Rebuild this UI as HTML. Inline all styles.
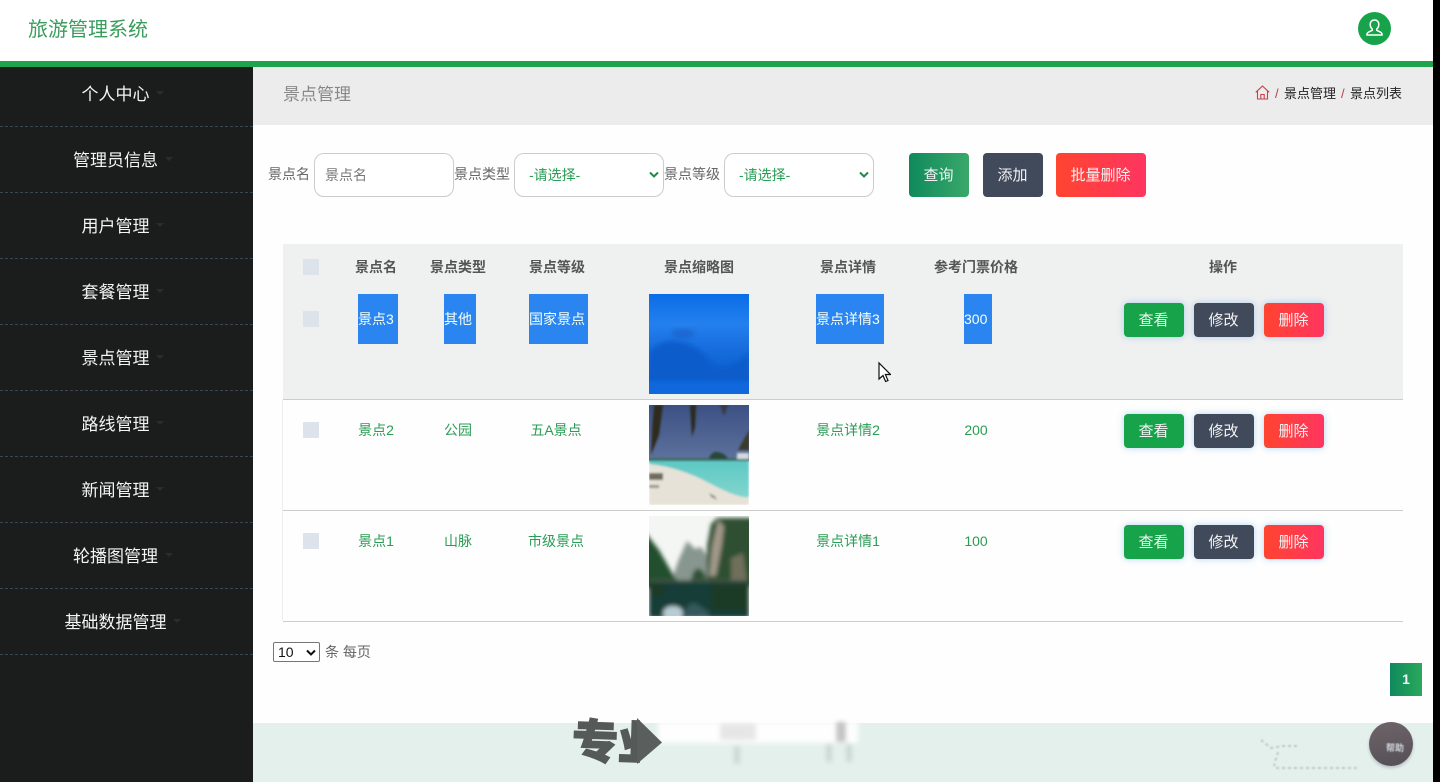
<!DOCTYPE html>
<html lang="zh-CN">
<head>
<meta charset="utf-8">
<title>旅游管理系统</title>
<style>
*{box-sizing:border-box;margin:0;padding:0}
html,body{width:1440px;height:782px;overflow:hidden;background:#fdfefd;font-family:"Liberation Sans","Noto Sans CJK SC",sans-serif}
.a{position:absolute}
.t{position:absolute;white-space:nowrap;line-height:20px}
.menu{position:absolute;left:0;width:253px;height:66px;border-bottom:1px dashed #3a4652;color:#f4f4f4;font-size:17px;text-align:center;line-height:68px;padding-right:22px}
.menu i{position:absolute;top:30px;width:0;height:0;border:4px solid transparent;border-top-color:#2c2c2c}
.th{position:absolute;top:257px;font-size:14px;font-weight:700;color:#555;line-height:20px;white-space:nowrap;transform:translateX(-50%)}
.td{position:absolute;font-size:14px;color:#2a9c55;line-height:20px;white-space:nowrap;transform:translateX(-50%)}
.hl{position:absolute;top:294px;height:50px;background:#2b85f0;color:#f4fff8;font-size:14px;line-height:50px;white-space:nowrap}
.cb{position:absolute;left:303px;width:16px;height:16px;background:#dde3ea}
.btn{position:absolute;width:60px;height:34px;border-radius:4px;color:#f4f4f4;font-size:15px;line-height:36px;text-align:center;padding-right:1px;box-shadow:0 0 7px rgba(90,160,230,.45)}
.g{background:#17a34a}.d{background:#414a5a}.r{background:linear-gradient(90deg,#ff4430,#ff3560)}
.inp{position:absolute;top:153px;height:44px;border:1px solid #ccc;border-radius:10px;background:#fff;font-size:14px;line-height:42px;padding-left:10px;color:#777}
.lab{position:absolute;top:164px;font-size:14px;color:#666;line-height:20px;white-space:nowrap}
.top{position:absolute;top:153px;height:44px;border-radius:4px;color:#f4f4f4;font-size:15px;line-height:46px;text-align:center;padding-right:1px}
.line{position:absolute;left:283px;width:1120px;height:1px;background:#ccc}
</style>
</head>
<body>
<!-- header -->
<div class="a" style="left:0;top:0;width:1440px;height:61px;background:#fff"></div>
<div class="t" style="left:28px;top:17px;font-size:20px;line-height:26px;color:#3a9d5d">旅游管理系统</div>
<div class="a" style="left:1358px;top:12px;width:33px;height:33px;border-radius:50%;background:#17a34a"></div>
<svg class="a" style="left:1358px;top:12px" width="33" height="33" viewBox="0 0 33 33" fill="none" stroke="#fff" stroke-width="1.5"><path d="M16.500 8c-2.700 0-4.300 2-4.300 4.400 0 2 .8 3.600 2 4.600v1.400c-1.600 1-5 1.600-5.200 3.600v1h15v-1c-.2-2-3.600-2.600-5.200-3.600V17c1.200-1 2-2.600 2-4.600C20.800 10 19.200 8 16.500 8z"/></svg>
<div class="a" style="left:0;top:61px;width:1440px;height:6px;background:#1fa34c"></div>

<!-- sidebar -->
<div class="a" style="left:0;top:67px;width:253px;height:715px;background:#1b1c1c"></div>
<div class="menu" style="top:67px;height:60px;line-height:56px">个人中心<i style="left:156px;top:24px"></i></div>
<div class="menu" style="top:127px">管理员信息<i style="left:165px"></i></div>
<div class="menu" style="top:193px">用户管理<i style="left:156px"></i></div>
<div class="menu" style="top:259px">套餐管理<i style="left:156px"></i></div>
<div class="menu" style="top:325px">景点管理<i style="left:156px"></i></div>
<div class="menu" style="top:391px">路线管理<i style="left:156px"></i></div>
<div class="menu" style="top:457px">新闻管理<i style="left:156px"></i></div>
<div class="menu" style="top:523px">轮播图管理<i style="left:165px"></i></div>
<div class="menu" style="top:589px">基础数据管理<i style="left:173px"></i></div>

<!-- breadcrumb bar -->
<div class="a" style="left:253px;top:67px;width:1180px;height:58px;background:#ebeceb"></div>
<div class="t" style="left:283px;top:85px;font-size:17px;color:#888">景点管理</div>
<svg class="a" style="left:1255px;top:85px" width="15" height="15" viewBox="0 0 15 15" fill="none" stroke="#c8404e" stroke-width="1.1"><path d="M.8 7.300L7.500 1l6.700 6.300M2.500 6.300V14h10V6.300M5.800 14V9.500h3.400V14"/></svg>
<div class="t" style="left:1275px;top:84px;font-size:13px;color:#b5404e">/</div>
<div class="t" style="left:1284px;top:84px;font-size:13px;color:#222">景点管理</div>
<div class="t" style="left:1341px;top:84px;font-size:13px;color:#b5404e">/</div>
<div class="t" style="left:1350px;top:84px;font-size:13px;color:#222">景点列表</div>

<!-- search -->
<div class="lab" style="left:268px">景点名</div>
<div class="inp" style="left:314px;width:140px">景点名</div>
<div class="lab" style="left:454px">景点类型</div>
<div class="inp" style="left:514px;width:150px;color:#2a9c55;padding-left:14px">-请选择-</div>
<svg class="a" style="left:649px;top:171px" width="10" height="8" viewBox="0 0 10 8" fill="none" stroke="#1f8a4c" stroke-width="2"><path d="M1 1.500l4 4 4-4"/></svg>
<div class="lab" style="left:664px">景点等级</div>
<div class="inp" style="left:724px;width:150px;color:#2a9c55;padding-left:14px">-请选择-</div>
<svg class="a" style="left:859px;top:171px" width="10" height="8" viewBox="0 0 10 8" fill="none" stroke="#1f8a4c" stroke-width="2"><path d="M1 1.500l4 4 4-4"/></svg>
<div class="top" style="left:909px;width:60px;background:linear-gradient(90deg,#0f8a5c,#3aa86a)">查询</div>
<div class="top" style="left:983px;width:60px;background:#414a5a">添加</div>
<div class="top" style="left:1056px;width:90px;background:linear-gradient(90deg,#ff4430,#ff3560)">批量删除</div>

<!-- table -->
<div class="a" style="left:283px;top:244px;width:1120px;height:155px;background:#eff0f0"></div>
<div class="line" style="top:399px"></div>
<div class="line" style="top:510px"></div>
<div class="line" style="top:621px"></div>
<div class="a" style="left:282px;top:400px;width:1px;height:221px;background:#eeeeee"></div>

<div class="cb" style="top:259px"></div>
<div class="th" style="left:376px">景点名</div>
<div class="th" style="left:458px">景点类型</div>
<div class="th" style="left:557px">景点等级</div>
<div class="th" style="left:699px">景点缩略图</div>
<div class="th" style="left:848px">景点详情</div>
<div class="th" style="left:976px">参考门票价格</div>
<div class="th" style="left:1223px">操作</div>

<!-- row 1 -->
<div class="cb" style="top:311px"></div>
<div class="hl" style="left:358px;width:40px">景点3</div>
<div class="hl" style="left:444px;width:32px">其他</div>
<div class="hl" style="left:529px;width:59px">国家景点</div>
<div class="hl" style="left:816px;width:68px">景点详情3</div>
<div class="hl" style="left:964px;width:28px">300</div>
<svg class="a" style="left:649px;top:294px" width="100" height="100" viewBox="0 0 100 100">
<defs><linearGradient id="s1" x1="0" y1="0" x2="0" y2="1"><stop offset="0" stop-color="#0a6de6"/><stop offset=".3" stop-color="#2480ee"/><stop offset=".5" stop-color="#1a70e0"/><stop offset=".85" stop-color="#0a5cca"/><stop offset=".87" stop-color="#1068dc"/><stop offset="1" stop-color="#1068dc"/></linearGradient>
<filter id="b1" x="-20%" y="-20%" width="140%" height="140%"><feGaussianBlur stdDeviation="2.500"/></filter><clipPath id="c1"><rect width="100" height="100"/></clipPath></defs>
<rect width="100" height="100" fill="url(#s1)"/>
<g clip-path="url(#c1)"><path d="M0 58Q14 44 32 48T62 68 100 58V86H0z" fill="#0a5ccc" filter="url(#b1)"/>
<ellipse cx="34" cy="40" rx="12" ry="5" fill="#1a68d2" filter="url(#b1)"/></g>
</svg>
<div class="btn g" style="left:1124px;top:303px">查看</div>
<div class="btn d" style="left:1194px;top:303px">修改</div>
<div class="btn r" style="left:1264px;top:303px">删除</div>

<!-- row 2 -->
<div class="cb" style="top:422px"></div>
<div class="td" style="left:376px;top:420px">景点2</div>
<div class="td" style="left:458px;top:420px">公园</div>
<div class="td" style="left:556px;top:420px">五A景点</div>
<div class="td" style="left:848px;top:420px">景点详情2</div>
<div class="td" style="left:976px;top:420px">200</div>
<svg class="a" style="left:649px;top:405px" width="100" height="100" viewBox="0 0 100 100">
<defs><filter id="b2" x="-20%" y="-20%" width="140%" height="140%"><feGaussianBlur stdDeviation="1"/></filter><linearGradient id="s2" x1="0" y1="0" x2="0" y2="1"><stop offset="0" stop-color="#3c5084"/><stop offset="1" stop-color="#5f739e"/></linearGradient><linearGradient id="w2" x1="0" y1="0" x2="0" y2="1"><stop offset="0" stop-color="#5cc8c4"/><stop offset="1" stop-color="#8ad8d0"/></linearGradient><clipPath id="c2"><rect width="100" height="100"/></clipPath></defs>
<g clip-path="url(#c2)"><rect width="100" height="56" fill="url(#s2)"/>
<g filter="url(#b2)">
<rect y="54" width="100" height="46" fill="url(#w2)"/>
<path d="M0 59Q30 62 60 78T100 92V100H0z" fill="#e6e2d8"/>
<rect y="53" width="100" height="3" fill="#3f6a64"/>
<path d="M60 54q2-8 9-7t10 7z" fill="#28483a"/>
<path d="M88 54v-6h12v6z" fill="#d5dbdd"/>
<path d="M5 0h9l-4 30L2 50l1-25z" fill="#2e2a1c"/>
<path d="M41 0h6l-1 22-3 10z" fill="#2c2a1c"/>
<path d="M71 0h8l-4 11z" fill="#343a3e"/>
<path d="M100 25v20h-11z" fill="#3a3a2a"/>
<path d="M0 68h14v7H0z" fill="#6f6a60"/>
<path d="M0 80h10v3H0zM60 88l6 3 2 4-6-3z" fill="#9a9488"/>
</g></g>
</svg>
<div class="btn g" style="left:1124px;top:414px">查看</div>
<div class="btn d" style="left:1194px;top:414px">修改</div>
<div class="btn r" style="left:1264px;top:414px">删除</div>

<!-- row 3 -->
<div class="cb" style="top:533px"></div>
<div class="td" style="left:376px;top:531px">景点1</div>
<div class="td" style="left:458px;top:531px">山脉</div>
<div class="td" style="left:556px;top:531px">市级景点</div>
<div class="td" style="left:848px;top:531px">景点详情1</div>
<div class="td" style="left:976px;top:531px">100</div>
<svg class="a" style="left:649px;top:516px" width="100" height="100" viewBox="0 0 100 100">
<defs><filter id="b3" x="-20%" y="-20%" width="140%" height="140%"><feGaussianBlur stdDeviation="2"/></filter><clipPath id="c3"><rect width="100" height="100"/></clipPath></defs>
<g clip-path="url(#c3)"><rect width="100" height="100" fill="#f4f6f3"/>
<g filter="url(#b3)">
<path d="M22 65l8-22 8-18 8 8 6-2 10 14v25H22z" fill="#87968e"/>
<path d="M-4 16l14 18 16 28 8 6v4H-4z" fill="#24502f"/>
<path d="M58 68V30L62 8l6-6h36v68z" fill="#2f4f30"/>
<path d="M60 60l3-30 6-26 6 6-2 18-6 32z" fill="#a09888"/>
<path d="M82 42l12-5 4 28H82z" fill="#70705a"/>
<path d="M42 64q3-14 9-11t7 15z" fill="#2f5236"/>
<rect y="66" width="100" height="36" fill="#123c38"/>
<rect y="64" width="100" height="2" fill="#4a5a48"/>
<ellipse cx="24" cy="97" rx="10" ry="7" fill="#b8ccd4"/>
<path d="M36 94q6-10 12-6t12 8v6H36z" fill="#34585c"/>
<path d="M0 68h16v12H0zM62 68h38v26H62z" fill="#1c3a28"/>
</g></g>
</svg>
<div class="btn g" style="left:1124px;top:525px">查看</div>
<div class="btn d" style="left:1194px;top:525px">修改</div>
<div class="btn r" style="left:1264px;top:525px">删除</div>

<!-- cursor -->
<svg class="a" style="left:877px;top:361px" width="14" height="23" viewBox="0 0 14 23"><path d="M2 2v16l4-3.500 2.600 6 2.400-1-2.600-6H13.500z" fill="#fff" stroke="#111" stroke-width="1.200"/></svg>

<!-- pagination -->
<div class="a" style="left:273px;top:642px;width:47px;height:20px;border:1px solid #767676;border-radius:2px;background:#fff;font-size:14px;line-height:19px;padding-left:4px;color:#111">10</div>
<svg class="a" style="left:306px;top:649px" width="10" height="8" viewBox="0 0 10 8" fill="none" stroke="#111" stroke-width="2"><path d="M1 1.500l4 4 4-4"/></svg>
<div class="t" style="left:325px;top:642px;font-size:14px;color:#666">条 每页</div>
<div class="a" style="left:1390px;top:663px;width:32px;height:33px;background:linear-gradient(90deg,#0f8a5c,#2ba85c);color:#f4f4f4;font-size:14px;font-weight:700;line-height:33px;text-align:center">1</div>

<!-- footer -->
<div class="a" style="left:253px;top:723px;width:1180px;height:59px;background:#e4f0ec"></div>
<svg class="a" style="left:650px;top:712px" width="225" height="58" viewBox="0 0 225 58"><defs><filter id="b4" x="-10%" y="-30%" width="120%" height="160%"><feGaussianBlur stdDeviation="2.500"/></filter></defs><g filter="url(#b4)"><rect x="8" y="10" width="200" height="21" fill="#fdfefd"/><rect x="70" y="12" width="36" height="16" fill="#e6e6e6"/><rect x="186" y="10" width="10" height="20" fill="#c4c4c4"/><rect x="84" y="34" width="6" height="18" fill="#ccd8d4"/><rect x="176" y="32" width="6" height="18" fill="#ccd8d4"/><rect x="196" y="32" width="6" height="18" fill="#ccd8d4"/></g></svg>
<div class="a" style="left:570px;top:708px;width:70px;height:64px;overflow:hidden"><div style="position:absolute;left:2px;top:9px;font-size:46px;line-height:52px;font-weight:900;color:#555a58;white-space:nowrap;transform:rotate(2deg);-webkit-text-stroke:1.500px #555a58;text-shadow:0 0 1px #fff">专业</div></div>
<svg class="a" style="left:636px;top:716px" width="28" height="50" viewBox="0 0 28 50"><path d="M1 2l25 24.500L1 48z" fill="#5a5e5c"/></svg>
<svg class="a" style="left:1258px;top:736px" width="105" height="38" viewBox="0 0 105 38"><defs><filter id="b5" x="-10%" y="-30%" width="120%" height="160%"><feGaussianBlur stdDeviation=".7"/></filter></defs><g filter="url(#b5)" fill="none" stroke="#bcc8c4" stroke-width="2" stroke-dasharray="3 3"><path d="M3 4l10 8 12-2 14 0"/><path d="M20 16l-4 14"/><path d="M18 32h84"/></g></svg>
<div class="a" style="left:1369px;top:722px;width:44px;height:44px;border-radius:50%;background:linear-gradient(170deg,#6e6468,#555056);box-shadow:0 2px 3px rgba(0,0,0,.2)"></div>
<div class="t" style="left:1386px;top:742px;font-size:9px;line-height:12px;color:#cfd4de;font-weight:700;filter:blur(.5px)">帮助</div>

<!-- scrollbar strip -->
<div class="a" style="left:1433px;top:0;width:7px;height:782px;background:#000"></div>
</body>
</html>
